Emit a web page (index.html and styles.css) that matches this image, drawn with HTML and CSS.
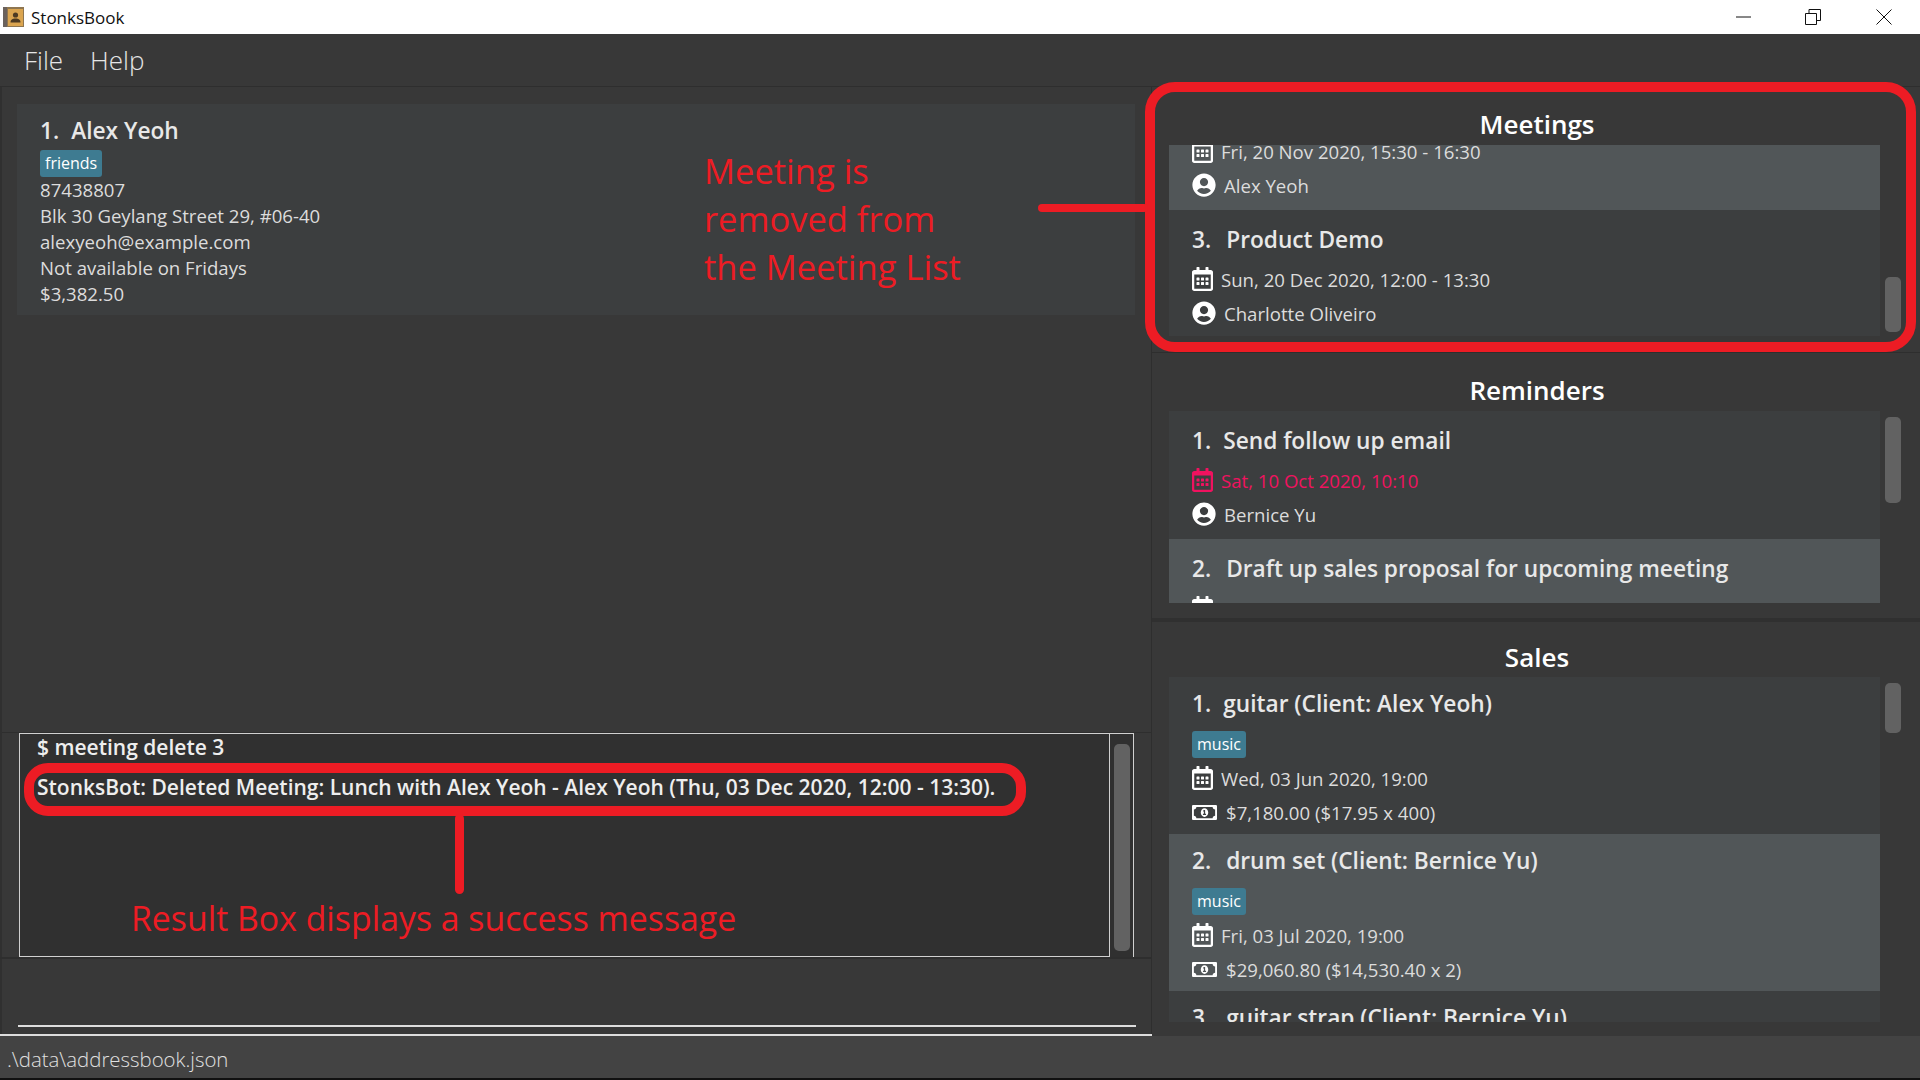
FILE: index.html
```html
<!DOCTYPE html>
<html lang="en">
<head>
    <meta charset="UTF-8">
    <title>StonksBook</title>
    <link rel="stylesheet" href="styles.css">
</head>
<body>
    <svg class="icon-defs" xmlns="http://www.w3.org/2000/svg">
        <symbol id="calendar" viewBox="0 0 448 512">
            <path d="M148 288h-40c-6.600 0-12-5.400-12-12v-40c0-6.600 5.400-12 12-12h40c6.600 0 12 5.400 12 12v40c0 6.600-5.400 12-12 12zm108-12v-40c0-6.600-5.400-12-12-12h-40c-6.600 0-12 5.400-12 12v40c0 6.600 5.400 12 12 12h40c6.600 0 12-5.400 12-12zm96 0v-40c0-6.600-5.400-12-12-12h-40c-6.600 0-12 5.400-12 12v40c0 6.600 5.400 12 12 12h40c6.600 0 12-5.400 12-12zm-96 96v-40c0-6.600-5.400-12-12-12h-40c-6.600 0-12 5.400-12 12v40c0 6.600 5.400 12 12 12h40c6.600 0 12-5.400 12-12zm-96 0v-40c0-6.600-5.400-12-12-12h-40c-6.600 0-12 5.400-12 12v40c0 6.600 5.400 12 12 12h40c6.600 0 12-5.400 12-12zm192 0v-40c0-6.600-5.400-12-12-12h-40c-6.600 0-12 5.400-12 12v40c0 6.600 5.400 12 12 12h40c6.600 0 12-5.400 12-12zm96-260v352c0 26.500-21.500 48-48 48H48c-26.500 0-48-21.500-48-48V112c0-26.500 21.500-48 48-48h48V12c0-6.600 5.400-12 12-12h40c6.600 0 12 5.400 12 12v52h128V12c0-6.600 5.400-12 12-12h40c6.600 0 12 5.400 12 12v52h48c26.500 0 48 21.500 48 48zm-48 346V160H48v298c0 3.300 2.700 6 6 6h340c3.300 0 6-2.700 6-6z"/>
        </symbol>
        <symbol id="person" viewBox="0 0 496 512">
            <path d="M248 8C111 8 0 119 0 256s111 248 248 248 248-111 248-248S385 8 248 8zm0 96c48.600 0 88 39.400 88 88s-39.400 88-88 88-88-39.400-88-88 39.400-88 88-88zm0 344c-58.700 0-111.300-26.600-146.500-68.200 18.800-35.400 55.600-59.800 98.500-59.800 2.400 0 4.800.4 7.100 1.100 13 4.200 26.600 6.900 40.900 6.900 14.300 0 28-2.700 40.900-6.900 2.300-.7 4.700-1.100 7.100-1.100 42.900 0 79.700 24.400 98.500 59.800C359.300 421.400 306.700 448 248 448z"/>
        </symbol>
        <symbol id="money" viewBox="0 64 640 384">
            <path d="M320 144c-53.020 0-96 50.140-96 112 0 61.850 42.980 112 96 112 53 0 96-50.130 96-112 0-61.860-42.980-112-96-112zm40 168c0 4.420-3.580 8-8 8h-64c-4.420 0-8-3.580-8-8v-16c0-4.420 3.580-8 8-8h16v-55.440l-.47.31a7.992 7.992 0 0 1-11.090-2.220l-8.880-13.310a7.992 7.992 0 0 1 2.220-11.090l15.330-10.220a23.990 23.990 0 0 1 13.310-4.030H328c4.420 0 8 3.580 8 8v88h16c4.420 0 8 3.580 8 8v16zM608 64H32C14.330 64 0 78.330 0 96v320c0 17.670 14.330 32 32 32h576c17.670 0 32-14.330 32-32V96c0-17.670-14.330-32-32-32zm-16 272c-35.350 0-64 28.650-64 64H112c0-35.350-28.650-64-64-64V176c35.350 0 64-28.650 64-64h416c0 35.350 28.650 64 64 64v160z"/>
        </symbol>
    </svg>

    <header class="titlebar">
        <svg class="app-icon" viewBox="0 0 21 20" xmlns="http://www.w3.org/2000/svg">
            <rect width="21" height="20" fill="#8f7650"/>
            <rect width="4" height="20" fill="#6b625c"/>
            <rect x="5" y="2" width="15" height="17" fill="#dba550"/>
            <circle cx="12.500" cy="8" r="2.600" fill="#4d3a22"/>
            <path d="M7.500 15.500c0-3 2-4 5-4s5 1 5 4z" fill="#4d3a22"/>
        </svg>
        <span class="app-name">StonksBook</span>
        <div class="window-controls">
            <div class="window-button">
                <svg width="16" height="16" viewBox="0 0 16 16"><path d="M0 8h15" stroke="#111" fill="none"/></svg>
            </div>
            <div class="window-button">
                <svg width="16" height="16" viewBox="0 0 16 16"><path d="M.5 4.500h11v11H.5zM4 4.500V.5h11.500v11H11.500" stroke="#111" fill="none"/></svg>
            </div>
            <div class="window-button window-close">
                <svg width="16" height="16" viewBox="0 0 16 16"><path d="M.5.5l15 15M15.500.5l-15 15" stroke="#111" fill="none"/></svg>
            </div>
        </div>
    </header>

    <nav class="menubar">
        <span>File</span>
        <span>Help</span>
    </nav>

    <main class="content">
        <section class="left-col">
            <div class="person-pane">
                <article class="person-card">
                    <h2 class="person-name"><span class="num">1.</span>Alex Yeoh</h2>
                    <span class="tag">friends</span>
                    <p>87438807</p>
                    <p>Blk 30 Geylang Street 29, #06-40</p>
                    <p>alexyeoh@example.com</p>
                    <p>Not available on Fridays</p>
                    <p>$3,382.50</p>
                </article>
            </div>
            <div class="result-pane">
                <div class="result-text">
                    <p class="result-command">$ meeting delete 3</p>
                    <p class="result-message">StonksBot: Deleted Meeting: Lunch with Alex Yeoh - Alex Yeoh (Thu, 03 Dec 2020, 12:00 - 13:30).</p>
                </div>
                <div class="result-scroll"><div class="thumb result-thumb"></div></div>
            </div>
            <div class="command-pane">
                <div class="command-line"></div>
            </div>
        </section>

        <section class="right-col">
            <div class="panel meetings">
                <h3 class="panel-title">Meetings</h3>
                <div class="panel-body">
                    <div class="list">
                        <div class="cell cell-alt cell-scrolled">
                            <div class="row row-cut"><svg class="icon-cal"><use href="#calendar"/></svg>Fri, 20 Nov 2020, 15:30 - 16:30</div>
                            <div class="row row-person"><svg class="icon-person"><use href="#person"/></svg>Alex Yeoh</div>
                        </div>
                        <div class="cell">
                            <div class="cell-title"><span class="num num-wide">3.</span>Product Demo</div>
                            <div class="row row-first"><svg class="icon-cal"><use href="#calendar"/></svg>Sun, 20 Dec 2020, 12:00 - 13:30</div>
                            <div class="row row-person"><svg class="icon-person"><use href="#person"/></svg>Charlotte Oliveiro</div>
                        </div>
                    </div>
                    <div class="scroll"><div class="thumb meetings-thumb"></div></div>
                </div>
            </div>

            <div class="panel reminders">
                <h3 class="panel-title">Reminders</h3>
                <div class="panel-body">
                    <div class="list">
                        <div class="cell">
                            <div class="cell-title"><span class="num">1.</span>Send follow up email</div>
                            <div class="row row-first overdue"><svg class="icon-cal"><use href="#calendar"/></svg>Sat, 10 Oct 2020, 10:10</div>
                            <div class="row row-person"><svg class="icon-person"><use href="#person"/></svg>Bernice Yu</div>
                        </div>
                        <div class="cell cell-alt">
                            <div class="cell-title"><span class="num num-wide">2.</span>Draft up sales proposal for upcoming meeting</div>
                            <div class="row row-first"><svg class="icon-cal"><use href="#calendar"/></svg>Tue, 15 Dec 2020, 09:00</div>
                        </div>
                    </div>
                    <div class="scroll"><div class="thumb reminders-thumb"></div></div>
                </div>
            </div>

            <div class="panel sales">
                <h3 class="panel-title">Sales</h3>
                <div class="panel-body">
                    <div class="list">
                        <div class="cell sale-cell">
                            <div class="cell-title"><span class="num">1.</span>guitar (Client: Alex Yeoh)</div>
                            <span class="tag sale-tag">music</span>
                            <div class="row sale-date"><svg class="icon-cal"><use href="#calendar"/></svg>Wed, 03 Jun 2020, 19:00</div>
                            <div class="row row-person"><svg class="icon-money"><use href="#money"/></svg>$7,180.00 ($17.95 x 400)</div>
                        </div>
                        <div class="cell cell-alt sale-cell">
                            <div class="cell-title"><span class="num num-wide">2.</span>drum set (Client: Bernice Yu)</div>
                            <span class="tag sale-tag">music</span>
                            <div class="row sale-date"><svg class="icon-cal"><use href="#calendar"/></svg>Fri, 03 Jul 2020, 19:00</div>
                            <div class="row row-person"><svg class="icon-money"><use href="#money"/></svg>$29,060.80 ($14,530.40 x 2)</div>
                        </div>
                        <div class="cell sale-cell">
                            <div class="cell-title"><span class="num num-wide">3.</span>guitar strap (Client: Bernice Yu)</div>
                        </div>
                    </div>
                    <div class="scroll"><div class="thumb sales-thumb"></div></div>
                </div>
            </div>
        </section>

        <!-- red notes drawn on top of the screenshot -->
        <div class="note note-meeting">Meeting is<br>removed from<br>the Meeting List</div>
        <div class="note note-result">Result Box displays a success message</div>
        <div class="mark mark-meetings"></div>
        <div class="mark mark-result"></div>
        <div class="stem stem-meetings"></div>
        <div class="stem stem-result"></div>
    </main>

    <footer class="statusbar">.\data\addressbook.json</footer>
</body>
</html>
```

FILE: styles.css
```css
* {
    box-sizing: border-box;
}

html, body {
    margin: 0;
    height: 1080px;
    overflow: hidden;
}

body {
    display: flex;
    flex-direction: column;
    background-color: #383838;
    color: #dcdcdc;
    font-family: "Open Sans", "Noto Sans", sans-serif;
    font-size: 18.6px;
}

p, h2, h3 {
    margin: 0;
    font-weight: normal;
}

.icon-defs {
    display: none;
}

/* title bar */
.titlebar {
    display: flex;
    align-items: center;
    height: 34px;
    padding-left: 3px;
    background-color: #fff;
    color: #111;
}

.app-icon {
    width: 21px;
    height: 20px;
}

.app-name {
    margin-left: 7px;
    font-size: 17px;
}

.window-controls {
    display: flex;
    margin-left: auto;
    padding-right: 2px;
}

.window-button {
    display: flex;
    align-items: center;
    justify-content: center;
    width: 69px;
    height: 34px;
}

.window-close {
    margin-left: 2px;
}

/* menu */
.menubar {
    display: flex;
    align-items: center;
    gap: 27px;
    height: 53px;
    padding-left: 24px;
    border-bottom: 1px solid #2e2e2e;
    color: #e6e6e6;
    font-size: 26px;
    font-weight: 300;
}

/* main area */
.content {
    position: relative;
    display: flex;
    height: 949px;
    min-height: 0;
}

.left-col {
    display: flex;
    flex: none;
    flex-direction: column;
    width: 1152px;
    border-right: 1px solid #2e2e2e;
    border-left: 2px solid #303030;
}

.person-pane {
    flex: none;
    height: 646px;
    padding: 17px 16px 0 15px;
    border-bottom: 1px solid #2e2e2e;
}

.person-card {
    height: 211px;
    padding: 11px 23px;
    background-color: #3c3e3f;
    line-height: 26px;
}

.person-name {
    margin-bottom: 3px;
    color: #e8e8e8;
    font-size: 22.7px;
    font-weight: 600;
    line-height: 32px;
}

.num {
    margin-right: 12px;
}

.num-wide {
    margin-right: 15px;
}

.tag {
    display: block;
    width: fit-content;
    height: 27px;
    padding: 0 5px;
    border-radius: 3px;
    background-color: #3e7b91;
    color: #fff;
    font-size: 16px;
    line-height: 26px;
}

/* result box */
.result-pane {
    display: flex;
    flex: none;
    height: 224px;
    margin: 0 17px;
    background-color: #303030;
}

.result-text {
    flex: 1;
    padding-left: 17px;
    border: 1px solid #d0d0d0;
    color: #eee;
    font-size: 21px;
}

.result-command {
    font-weight: 600;
    line-height: 26px;
}

.result-message {
    margin-top: 14px;
    font-weight: 600;
    line-height: 26px;
    white-space: nowrap;
}

.result-scroll {
    width: 24px;
    padding: 10px 3px 0 4px;
    border-top: 1px solid #d0d0d0;
    border-right: 1px solid #d0d0d0;
}

.thumb {
    width: 16px;
    border-radius: 5px;
    background-color: #626262;
}

.result-thumb {
    height: 207px;
}

.command-pane {
    flex: 1;
    padding-top: 66px;
    border-top: 2px solid #2e2e2e;
    border-bottom: 2px solid #ddd;
    margin-left: -2px;
    margin-right: -1px;
}

.command-line {
    height: 2px;
    margin: 0 16px 0 18px;
    background-color: #ddd;
}

/* right side panels */
.right-col {
    display: flex;
    flex-direction: column;
    flex: 1;
    min-width: 0;
    min-height: 0;
}

.panel {
    display: flex;
    flex-direction: column;
    min-height: 0;
    padding-left: 17px;
}

.meetings {
    flex: none;
    height: 266px;
    padding-bottom: 16px;
    border-bottom: 1px solid #2e2e2e;
}

.reminders {
    flex: none;
    height: 265px;
    padding-bottom: 15px;
}

.sales {
    flex: 1;
    padding-bottom: 14px;
    border-top: 4px solid #303030;
}

.panel-title {
    flex: none;
    height: 58px;
    margin-right: 15px;
    padding-top: 21px;
    color: #fff;
    font-size: 26px;
    font-weight: 600;
    line-height: 32px;
    text-align: center;
}

.sales .panel-title {
    height: 55px;
    padding-top: 19px;
}

.panel-body {
    display: flex;
    flex: 1;
    gap: 5px;
    min-height: 0;
}

.list {
    width: 711px;
    overflow: hidden;
    background-color: #3c3e3f;
}

.scroll {
    width: 16px;
}

.meetings-thumb {
    height: 55px;
    margin-top: 132px;
}

.reminders-thumb {
    height: 86px;
    margin-top: 6px;
}

.sales-thumb {
    height: 50px;
    margin-top: 6px;
}

.cell {
    height: 128px;
    padding: 14px 23px 0;
}

.cell-alt {
    background-color: #515658;
}

.cell-title {
    color: #e8e8e8;
    font-size: 22.7px;
    font-weight: 600;
    line-height: 32px;
    white-space: nowrap;
}

.row {
    display: flex;
    align-items: center;
    height: 24px;
    white-space: nowrap;
}

.row-first {
    margin-top: 11px;
}

.row-person {
    margin-top: 10px;
}

.overdue {
    color: #f0125f;
}

.cell-scrolled {
    display: flow-root;
    height: 65px;
    padding-top: 0;
}

.row-cut {
    margin-top: -6px;
}

.sale-cell {
    height: 157px;
    padding-top: 11px;
}

.sale-tag {
    margin-top: 11px;
}

.sale-date {
    margin-top: 8px;
}

svg {
    fill: #fff;
}

.overdue svg {
    fill: #f0125f;
}

.icon-cal {
    flex: none;
    width: 21px;
    height: 24px;
    margin-right: 8px;
}

.icon-person {
    flex: none;
    width: 24px;
    height: 24px;
    margin-right: 8px;
}

.icon-money {
    flex: none;
    width: 25px;
    height: 15px;
    margin-right: 9px;
}

/* status bar */
.statusbar {
    height: 44px;
    padding-left: 7px;
    border-bottom: 2px solid #111;
    background-color: #434343;
    color: #e0e0e0;
    font-size: 20.4px;
    font-weight: 300;
    line-height: 46px;
}

/* annotations */
.note {
    position: absolute;
    color: #ed1c24;
    line-height: 48px;
    white-space: nowrap;
}

.note-meeting {
    top: 60px;
    left: 704px;
    font-size: 34.5px;
}

.note-result {
    top: 807px;
    left: 131px;
    font-size: 33.8px;
}

.mark {
    position: absolute;
    border: 10px solid #ed1c24;
}

.mark-meetings {
    top: -5px;
    left: 1145px;
    width: 771px;
    height: 270px;
    border-radius: 30px;
}

.mark-result {
    top: 676px;
    left: 24px;
    width: 1002px;
    height: 53px;
    border-radius: 24px;
}

.stem {
    position: absolute;
    background-color: #ed1c24;
    border-radius: 5px;
}

.stem-meetings {
    top: 117px;
    left: 1038px;
    width: 110px;
    height: 8px;
}

.stem-result {
    top: 727px;
    left: 455px;
    width: 9px;
    height: 80px;
}
```
